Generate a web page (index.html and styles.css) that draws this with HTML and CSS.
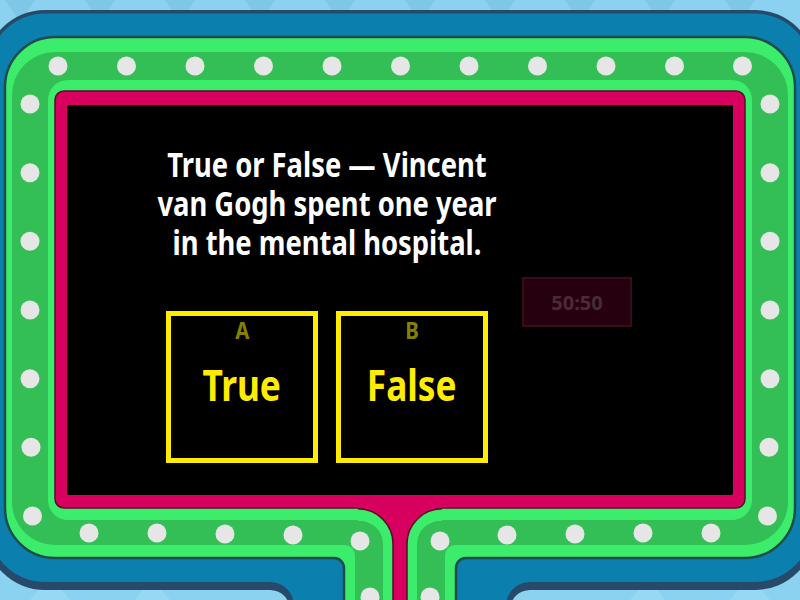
FILE: index.html
```html
<!DOCTYPE html>
<html lang="en">
<head>
<meta charset="utf-8">
<title>Gameshow quiz</title>
<link rel="stylesheet" href="styles.css">
</head>
<body>
<div class="stage">
  <svg class="frame" viewBox="0 0 800 600" width="800" height="600" aria-hidden="true">
    <rect x="0" y="0" width="800" height="600" fill="#8ad2f0"/>
    <g fill="#7ec7e7">
      <polygon points="5,0 35,0 20,22"/>
      <polygon points="85,0 115,0 100,22"/>
      <polygon points="165,0 195,0 180,22"/>
      <polygon points="245,0 275,0 260,22"/>
      <polygon points="325,0 355,0 340,22"/>
      <polygon points="405,0 435,0 420,22"/>
      <polygon points="485,0 515,0 500,22"/>
      <polygon points="565,0 595,0 580,22"/>
      <polygon points="645,0 675,0 660,22"/>
      <polygon points="725,0 755,0 740,22"/>
    </g>
    <g fill="#97d9f4">
      <polygon points="30,600 50,575 70,600"/>
      <polygon points="135,600 152,578 170,600"/>
      <polygon points="630,600 648,578 665,600"/>
      <polygon points="730,600 750,575 770,600"/>
    </g>
    <path fill="#27496a" d="M -15 70 A 60 60 0 0 1 45 10 H 755 A 60 60 0 0 1 815 70 V 530 A 60 60 0 0 1 755 590 H 530 A 20 20 0 0 0 510 610 V 620 H 290 V 610 A 20 20 0 0 0 270 590 H 45 A 60 60 0 0 1 -15 530 Z"/>
    <path fill="#0b7fae" d="M -11.5 70 A 56.5 56.5 0 0 1 45 13.5 H 755 A 56.5 56.5 0 0 1 811.5 70 V 525.5 A 56.5 56.5 0 0 1 755 582 H 530 A 24 24 0 0 0 506 606 V 620 H 294 V 606 A 24 24 0 0 0 270 582 H 45 A 56.5 56.5 0 0 1 -11.5 525.5 Z"/>
    <path fill="#3ced6b" stroke="#1d4e4a" stroke-width="2.5" d="M 55 37 H 745 A 50 50 0 0 1 795 87 V 508 A 50 50 0 0 1 745 558 H 466 A 10 10 0 0 0 456 568 V 620 H 344 V 568 A 10 10 0 0 0 334 558 H 55 A 50 50 0 0 1 5 508 V 87 A 50 50 0 0 1 55 37 Z"/>
    <path fill="#33bf55" d="M 55 52 H 745 A 43 43 0 0 1 788 95 V 502 A 43 43 0 0 1 745 545 H 455 A 10 10 0 0 0 445 555 V 620 H 355 V 555 A 10 10 0 0 0 345 545 H 55 A 43 43 0 0 1 12 502 V 95 A 43 43 0 0 1 55 52 Z"/>
    <rect x="48" y="80" width="704" height="440" rx="20" fill="#3ced6b"/>
    <rect x="55" y="91" width="690" height="417" rx="9" fill="#d8005e" stroke="#5a0a2c" stroke-width="1.5"/>
    <rect x="67" y="105" width="666" height="390" rx="2" fill="#000"/>
    <path fill="#3ced6b" d="M 358 508 H 442 V 521 A 23 23 0 0 0 417 544 V 620 H 383 V 544 A 23 23 0 0 0 358 521 Z"/>
    <path fill="#d8005e" d="M 358 500 H 442 V 509 A 35 35 0 0 0 407 544 V 620 H 393 V 544 A 35 35 0 0 0 358 509 Z"/>
    <path fill="none" stroke="#5a0a2c" stroke-width="1.5" d="M 358 508.8 A 35 35 0 0 1 393 544 V 620 M 407 620 V 544 A 35 35 0 0 1 442 508.8"/>
    <g fill="#e6e6e6">
      <circle cx="58" cy="66" r="9.5"/><circle cx="126.5" cy="66" r="9.5"/><circle cx="195" cy="66" r="9.5"/>
      <circle cx="263.5" cy="66" r="9.5"/><circle cx="332" cy="66" r="9.5"/><circle cx="400.5" cy="66" r="9.5"/>
      <circle cx="469" cy="66" r="9.5"/><circle cx="537.5" cy="66" r="9.5"/><circle cx="606" cy="66" r="9.5"/>
      <circle cx="674.5" cy="66" r="9.5"/><circle cx="742.5" cy="66" r="9.5"/>
      <circle cx="30" cy="104" r="9.5"/><circle cx="30" cy="172.7" r="9.5"/><circle cx="30" cy="241.3" r="9.5"/>
      <circle cx="30" cy="310" r="9.5"/><circle cx="30" cy="378.7" r="9.5"/><circle cx="31" cy="447.3" r="9.5"/>
      <circle cx="32.5" cy="516" r="9.5"/>
      <circle cx="770" cy="104" r="9.5"/><circle cx="770" cy="172.7" r="9.5"/><circle cx="770" cy="241.3" r="9.5"/>
      <circle cx="770" cy="310" r="9.5"/><circle cx="770" cy="378.7" r="9.5"/><circle cx="769" cy="447.3" r="9.5"/>
      <circle cx="767.5" cy="516" r="9.5"/>
      <circle cx="89" cy="533" r="9.5"/><circle cx="157" cy="533" r="9.5"/><circle cx="225" cy="534" r="9.5"/>
      <circle cx="293" cy="535" r="9.5"/><circle cx="360" cy="541" r="9.5"/>
      <circle cx="440" cy="541" r="9.5"/><circle cx="507" cy="535" r="9.5"/><circle cx="575" cy="534" r="9.5"/>
      <circle cx="643" cy="533" r="9.5"/><circle cx="711" cy="533" r="9.5"/>
      <circle cx="370" cy="597" r="9.5"/><circle cx="430" cy="597" r="9.5"/>
    </g>
  </svg>

  <div class="screen">
    <div class="quiz">
      <p class="question">True or False — Vincent van Gogh spent one year in the mental hospital.</p>
      <div class="answers">
        <div class="answer">
          <span class="letter">A</span>
          <span class="answer-text">True</span>
        </div>
        <div class="answer">
          <span class="letter">B</span>
          <span class="answer-text">False</span>
        </div>
      </div>
    </div>
    <div class="side">
      <div class="fifty">50:50</div>
    </div>
  </div>
</div>
</body>
</html>
```

FILE: styles.css
```css
html, body {
  margin: 0;
  padding: 0;
  background: #8ad2f0;
}

.stage {
  width: 800px;
  height: 600px;
  display: grid;
  overflow: hidden;
  font-family: "Noto Sans", "DejaVu Sans", sans-serif;
}

.frame,
.screen {
  grid-area: 1 / 1;
}

.frame {
  display: block;
}

.screen {
  margin: 105px 67px;
  display: flex;
  align-items: flex-start;
}

.quiz {
  width: 340px;
  margin-left: 90px;
  display: flex;
  flex-direction: column;
  align-items: center;
}

/* condensed look: the text is laid out wide, then narrowed */
.question {
  flex: none;
  margin: 0;
  padding-top: 40px;
  width: 436px;
  color: #ffffff;
  font-weight: bold;
  font-size: 34px;
  line-height: 39px;
  text-align: center;
  transform: scaleX(0.805);
  transform-origin: 50% 0;
}

.answers {
  margin-top: 49px;
  display: flex;
  gap: 18px;
}

.answer {
  box-sizing: border-box;
  width: 152px;
  height: 152px;
  border: 5px solid #ffec00;
  display: flex;
  flex-direction: column;
  align-items: center;
}

.letter {
  margin-top: 2px;
  color: #858000;
  font-weight: bold;
  font-size: 24px;
  line-height: 24px;
  transform: scaleX(0.85);
}

.answer-text {
  margin-top: 21px;
  color: #ffec00;
  font-weight: bold;
  font-size: 43px;
  line-height: 43px;
  transform: scaleX(0.82);
}

.side {
  margin-left: 25px;
  margin-top: 172px;
}

.fifty {
  box-sizing: border-box;
  width: 110px;
  height: 50px;
  background: #27000f;
  border: 2px solid #3a0a1e;
  color: #4b2a38;
  font-weight: bold;
  font-size: 20px;
  display: flex;
  align-items: center;
  justify-content: center;
}
```
